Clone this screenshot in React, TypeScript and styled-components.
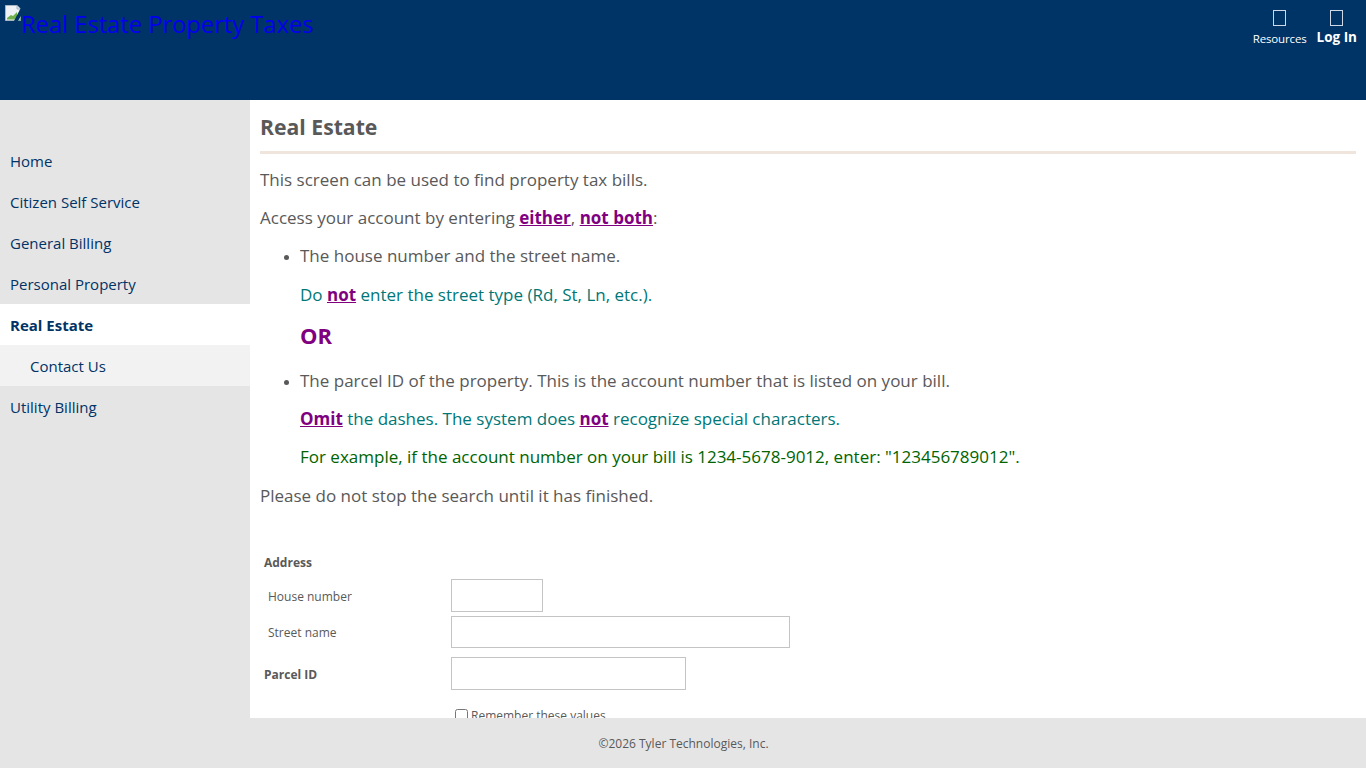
import React from "react";
import styled, { createGlobalStyle } from "styled-components";

const Global = createGlobalStyle`
  html, body { margin: 0; padding: 0; height: 100%; overflow: hidden; }
  body { font-family: "Open Sans", "Liberation Sans", sans-serif; color: #595959; background: #fff; }
  * { box-sizing: border-box; }
`;
const Page = styled.div`height: 768px; display: flex; flex-direction: column; overflow: hidden;`;
const Header = styled.header`
  height: 100px; flex: none; background: #003366; display: flex; justify-content: space-between; padding: 5px 9px 0 5px;
`;
const Logo = styled.a`
  display: flex; align-items: flex-start; color: #0000ee; font-size: 23.7px; line-height: 30px; height: 40px; text-decoration: none;
  svg { flex: none; }
  span { margin-top: 4px; }
`;
const HeaderActions = styled.div`display: flex; gap: 10px; align-items: flex-start; padding-top: 4px;`;
const Action = styled.div<{ $bold?: boolean }>`
  display: flex; flex-direction: column; align-items: center; color: #fff;
  font-size: ${(p) => (p.$bold ? 13.5 : 11.5)}px; line-height: 16px; font-weight: ${(p) => (p.$bold ? 700 : 400)};
  letter-spacing: ${(p) => (p.$bold ? 0 : -0.15)}px;
  margin-top: ${(p) => (p.$bold ? 0 : 1)}px;
`;
const TofuIcon = styled.span<{ $bold?: boolean }>`
  display: block; width: 13px; height: 16px; border: 1px solid #cfd8e6; margin-bottom: ${(p) => (p.$bold ? 3 : 5)}px;
  margin-top: ${(p) => (p.$bold ? 1 : 0)}px;
`;
const Middle = styled.div`flex: 1; min-height: 0; display: flex; overflow: hidden;`;
const Sidebar = styled.nav`width: 250px; flex: none; background: #e5e5e5; padding-top: 40px;`;
const NavItem = styled.a<{ $active?: boolean; $sub?: boolean }>`
  display: flex; align-items: center; height: 41px; font-size: 15px; color: #003366; text-decoration: none;
  padding-left: ${(p) => (p.$sub ? 30 : 10)}px;
  background: ${(p) => (p.$active ? "#fff" : p.$sub ? "#f2f2f2" : "transparent")};
  font-weight: ${(p) => (p.$active ? 700 : 400)};
`;
const Main = styled.main`flex: 1; min-width: 0; padding: 10px 10px 0; overflow: hidden;`;
const Title = styled.h1`
  margin: 0 0 14px; height: 44px; padding-top: 1px; font-size: 21.2px; line-height: 32px; font-weight: 700; color: #595959;
  border-bottom: 3px solid #efe5dc;
`;
const Para = styled.p`margin: 0 0 14px; font-size: 17px; line-height: 24px;`;
const Bullets = styled.ul`margin: 0; padding: 0 0 0 40px;`;
const Bullet = styled.li<{ $gap: number }>`
  font-size: 17px; line-height: 24px; margin-bottom: ${(p) => p.$gap}px;
  &::marker { font-size: 13px; }
`;
const Note = styled.p<{ $tone: "teal" | "green"; $gap: number }>`
  margin: 0 0 ${(p) => p.$gap}px 40px; font-size: 17px; line-height: 24px;
  color: ${(p) => (p.$tone === "teal" ? "#007777" : "#006400")};
`;
const Or = styled.p`margin: 0 0 20px 40px; font-size: 22px; line-height: 28px; font-weight: 700; color: #800080;`;
const Em = styled.strong`color: #800080; text-decoration: underline; font-weight: 700;`;
const Form = styled.form`
  margin-top: 45px; display: grid; grid-template-columns: 191px 1fr; row-gap: 4px; align-items: center;
`;
const Section = styled.div`grid-column: 1 / 3; padding-left: 4px; height: 22px; font-size: 12px; line-height: 19px; font-weight: 700;`;
const FieldLabel = styled.label<{ $bold?: boolean }>`
  font-size: 12px; line-height: 16px; padding-left: ${(p) => (p.$bold ? 4 : 8)}px; font-weight: ${(p) => (p.$bold ? 700 : 400)};
  margin-top: ${(p) => (p.$bold ? 7 : 2)}px;
`;
const Field = styled.input<{ $w: number; $h: number; $top?: number }>`
  display: block; width: ${(p) => p.$w}px; height: ${(p) => p.$h}px; border: 1px solid #c4c4c4; background: #fff; padding: 0;
  margin: ${(p) => p.$top ?? 0}px 0 0;
`;
const Remember = styled.label`
  grid-column: 2; display: flex; align-items: center; gap: 3px; padding-left: 4px; margin-top: 12px; font-size: 12px; line-height: 16px;
  input { margin: 0; width: 13px; height: 13px; }
  span { margin-top: 2px; }
`;
const Footer = styled.footer`
  height: 50px; flex: none; background: #e5e5e5; display: flex; align-items: center; justify-content: center; padding-left: 1px;
  font-size: 12px; color: #595959;
`;

const BrokenImage = () => (
  <svg width="16" height="16" viewBox="0 0 16 16" aria-hidden="true">
    <path d="M0.5 0.5H12L15.5 4V15.5H0.5Z" fill="#eef2f7" stroke="#a9b4c2" />
    <path d="M12 0.5V4H15.5" fill="#d5deea" stroke="#a9b4c2" />
    <path d="M2 14.5V13L6 10L8 11L12 7V14.5Z" fill="#6fb04a" />
    <path d="M16 2.5L9 16H13L16 11Z" fill="#003366" />
    <path d="M16 12L13.5 16H16Z" fill="#7fa98c" />
  </svg>
);

export default function App() {
  return (
    <Page>
      <Global />
      <Header>
        <Logo href="#">
          <BrokenImage />
          <span>Real Estate Property Taxes</span>
        </Logo>
        <HeaderActions>
          <Action><TofuIcon />Resources</Action>
          <Action $bold><TofuIcon $bold />Log In</Action>
        </HeaderActions>
      </Header>
      <Middle>
        <Sidebar>
          <NavItem href="#">Home</NavItem>
          <NavItem href="#">Citizen Self Service</NavItem>
          <NavItem href="#">General Billing</NavItem>
          <NavItem href="#">Personal Property</NavItem>
          <NavItem href="#" $active>Real Estate</NavItem>
          <NavItem href="#" $sub>Contact Us</NavItem>
          <NavItem href="#">Utility Billing</NavItem>
        </Sidebar>
        <Main>
          <Title>Real Estate</Title>
          <Para>This screen can be used to find property tax bills.</Para>
          <Para>Access your account by entering <Em>either</Em>, <Em>not both</Em>:</Para>
          <Bullets><Bullet $gap={15}>The house number and the street name.</Bullet></Bullets>
          <Note $tone="teal" $gap={14}>Do <Em>not</Em> enter the street type (Rd, St, Ln, etc.).</Note>
          <Or>OR</Or>
          <Bullets><Bullet $gap={14}>The parcel ID of the property. This is the account number that is listed on your bill.</Bullet></Bullets>
          <Note $tone="teal" $gap={14}><Em>Omit</Em> the dashes. The system does <Em>not</Em> recognize special characters.</Note>
          <Note $tone="green" $gap={15}>For example, if the account number on your bill is 1234-5678-9012, enter: "123456789012".</Note>
          <Para>Please do not stop the search until it has finished.</Para>
          <Form>
            <Section>Address</Section>
            <FieldLabel>House number</FieldLabel>
            <Field $w={92} $h={33} />
            <FieldLabel>Street name</FieldLabel>
            <Field $w={339} $h={32} />
            <FieldLabel $bold>Parcel ID</FieldLabel>
            <Field $w={235} $h={33} $top={5} />
            <Remember><input type="checkbox" /><span>Remember these values</span></Remember>
          </Form>
        </Main>
      </Middle>
      <Footer>©2026 Tyler Technologies, Inc.</Footer>
    </Page>
  );
}
